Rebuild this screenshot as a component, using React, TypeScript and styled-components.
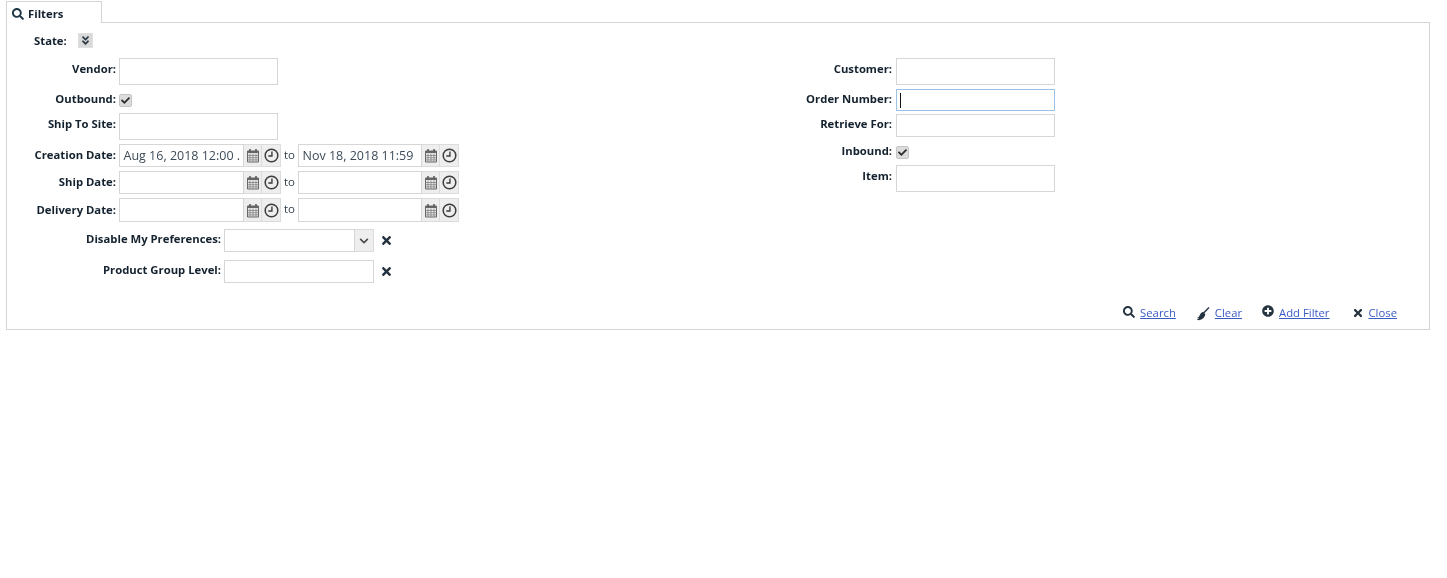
import React from "react";
import styled, { createGlobalStyle } from "styled-components";
import { FaSearch, FaTimes, FaChevronDown, FaAngleDoubleDown, FaCheck, FaPlusCircle } from "react-icons/fa";

const Global = createGlobalStyle`
  html, body { margin: 0; padding: 0; background: #fff; }
  body { font-family: "Open Sans", "Liberation Sans", sans-serif; font-size: 12px; color: #1f2d3a; }
`;

const Page = styled.div`
  padding: 1px 17px 0 6px;
  width: 1424px;
  filter: blur(0.25px);
`;

const Tab = styled.div`
  box-sizing: border-box;
  width: 96px;
  height: 22px;
  margin-bottom: -1px;
  position: relative;
  z-index: 1;
  background: #fff;
  border: 1px solid #d4d4d4;
  border-bottom: none;
  display: flex;
  align-items: center;
  gap: 4px;
  padding: 2px 0 0 5px;
  font-size: 11.3px;
  font-weight: 700;
  color: #14222f;
  svg { font-size: 12px; color: #1f3846; }
`;

const Panel = styled.div`
  box-sizing: border-box;
  height: 308px;
  border: 1px solid #d4d4d4;
  padding-top: 10px;
  display: flex;
  flex-direction: column;
`;

const StateRow = styled.div`
  display: flex;
  align-items: center;
  height: 15px;
  padding-left: 27px;
  font-size: 11.3px;
  font-weight: 700;
  color: #14222f;
`;

const StateText = styled.span``;

const Toggle = styled.span`
  box-sizing: border-box;
  width: 15px;
  height: 15px;
  margin-left: 11px;
  background: #d9d9d9;
  border: 1px solid #e0e0e0;
  display: flex;
  align-items: center;
  justify-content: center;
  color: #2c3a46;
  svg { font-size: 11px; }
`;

const Columns = styled.div`
  display: grid;
  grid-template-columns: 776px 1fr;
  margin-top: 10px;
  flex: 1;
`;

const Column = styled.div`
  display: flex;
  flex-direction: column;
`;

const Row = styled.div<{ $h: number; $top?: number }>`
  display: flex;
  align-items: center;
  height: ${(p) => p.$h}px;
  margin-top: ${(p) => p.$top ?? 0}px;
`;

const Label = styled.label<{ $w: number; $gap?: number; $lift?: number }>`
  width: ${(p) => p.$w}px;
  margin-right: ${(p) => p.$gap ?? 3}px;
  margin-top: ${(p) => -2 * (p.$lift ?? 1.5)}px;
  text-align: right;
  flex: none;
  font-size: 11.3px;
  font-weight: 700;
  color: #14222f;
  white-space: nowrap;
`;

const TextBox = styled.div<{ $w: number; $focus?: boolean }>`
  box-sizing: border-box;
  width: ${(p) => p.$w}px;
  height: 100%;
  flex: none;
  background: #fff;
  border: 1px solid ${(p) => (p.$focus ? "#9cc3e6" : "#d6d6d6")};
  display: flex;
  align-items: center;
  padding-left: 3.5px;
  font-size: 12.5px;
  color: #3e4c59;
  white-space: nowrap;
  overflow: hidden;
`;

const Caret = styled.span`
  width: 1px;
  height: 15px;
  margin-left: -1px;
  background: #111;
`;

const Check = styled.span`
  box-sizing: border-box;
  width: 13px;
  height: 13px;
  background: #dcdcdc;
  border: 1px solid #c4c4c4;
  border-radius: 2px;
  display: flex;
  align-items: center;
  justify-content: center;
  color: #2d2d2d;
  svg { font-size: 9px; }
`;

const Addon = styled.span<{ $w: number }>`
  box-sizing: border-box;
  width: ${(p) => p.$w}px;
  height: 100%;
  flex: none;
  background: #eeeeee;
  border: 1px solid #dcdcdc;
  border-left: none;
  display: flex;
  align-items: center;
  justify-content: center;
  color: #4a4a4a;
`;

const To = styled.span`
  width: 17px;
  flex: none;
  text-align: center;
  font-size: 11.5px;
  color: #33424f;
  margin-top: -3px;
`;

const ClearBtn = styled.span`
  margin-left: 6px;
  display: flex;
  color: #22313e;
  svg { font-size: 13px; }
`;

const Footer = styled.div`
  height: 24px;
  margin-bottom: 5px;
  display: flex;
  align-items: center;
  justify-content: flex-end;
  padding-right: 32px;
`;

const Action = styled.span<{ $left: number; $drop?: number }>`
  display: flex;
  align-items: center;
  margin-left: ${(p) => p.$left}px;
  gap: 5px;
  svg { font-size: 12px; color: #26343f; flex: none; position: relative; top: ${(p) => p.$drop ?? 0}px; }
`;

const LinkText = styled.a`
  font-size: 11.3px;
  color: #3b5bc4;
  text-decoration: underline;
`;

const CalendarIcon = () => (
  <svg width="14" height="15" viewBox="0 0 14 15" fill="none">
    <path d="M1.5 3h11v11h-11z" fill="#e8e8e8" stroke="#666" />
    <path d="M1.5 3h11v2h-11z" fill="#666" />
    <path d="M4 5.5v8M7 5.5v8M10 5.5v8M1.5 7.500h11M1.500 9.700h11M1.500 11.900h11" stroke="#777" strokeWidth="0.7" />
    <path d="M4 1v2.500M10 1v2.500" stroke="#555" strokeWidth="1.5" />
  </svg>
);

const ClockIcon = () => (
  <svg width="15" height="15" viewBox="0 0 14 14" fill="none">
    <circle cx="7" cy="7" r="5.9" stroke="#3d3d3d" strokeWidth="1.4" />
    <path d="M7.4 3.2v4.2H4" stroke="#3d3d3d" strokeWidth="1.3" />
  </svg>
);

const BroomIcon = () => (
  <svg width="14" height="14" viewBox="0 0 14 14">
    <path d="M13 .6 7.600 6" stroke="#26343f" strokeWidth="1.4" fill="none" />
    <path d="M6.600 4.900c1.400.3 2.400 1.300 2.700 2.600-.4 2.600-2.600 4.900-5.500 5.600-1.200.2-2.400-.2-3-.9.9 0 1.700-.3 2.300-1-.9.3-1.700.2-2.300-.2 1.200-.3 2-1 2.500-2 .6-1.600 1.500-3.200 3.300-4.100Z" fill="#26343f" />
  </svg>
);

const DateField: React.FC<{ value?: string; w: number }> = ({ value, w }) => (
  <>
    <TextBox $w={w}>{value}</TextBox>
    <Addon $w={18}><CalendarIcon /></Addon>
    <Addon $w={19}><ClockIcon /></Addon>
  </>
);

const DateRow: React.FC<{ label: string; h: number; top: number; from?: string; to?: string }> = ({ label, h, top, from, to }) => (
  <Row $h={h} $top={top}>
    <Label $w={109} $lift={1}>{label}</Label>
    <DateField value={from} w={125} />
    <To>to</To>
    <DateField value={to} w={124} />
  </Row>
);

export default function App() {
  return (
    <Page>
      <Global />
      <Tab><FaSearch />Filters</Tab>
      <Panel>
        <StateRow><StateText>State:</StateText><Toggle><FaAngleDoubleDown /></Toggle></StateRow>
        <Columns>
          <Column>
            <Row $h={27}><Label $w={109} $lift={3.5}>Vendor:</Label><TextBox $w={159} /></Row>
            <Row $h={14} $top={8}><Label $w={109} $lift={1.5}>Outbound:</Label><Check><FaCheck /></Check></Row>
            <Row $h={27} $top={6}><Label $w={109} $lift={3.5}>Ship To Site:</Label><TextBox $w={159} /></Row>
            <DateRow label="Creation Date:" h={23} top={4} from="Aug 16, 2018 12:00 ." to="Nov 18, 2018 11:59" />
            <DateRow label="Ship Date:" h={23} top={4} />
            <DateRow label="Delivery Date:" h={24} top={4} />
            <Row $h={23} $top={7}>
              <Label $w={214} $lift={2}>Disable My Preferences:</Label>
              <TextBox $w={131} />
              <Addon $w={19}><FaChevronDown size={10} /></Addon>
              <ClearBtn><FaTimes /></ClearBtn>
            </Row>
            <Row $h={23} $top={8}>
              <Label $w={214} $lift={2}>Product Group Level:</Label>
              <TextBox $w={150} />
              <ClearBtn><FaTimes /></ClearBtn>
            </Row>
          </Column>
          <Column>
            <Row $h={27}><Label $w={109} $gap={4} $lift={3.5}>Customer:</Label><TextBox $w={159} /></Row>
            <Row $h={22} $top={4}><Label $w={109} $gap={4} $lift={1.5}>Order Number:</Label><TextBox $w={159} $focus><Caret /></TextBox></Row>
            <Row $h={23} $top={3}><Label $w={109} $gap={4} $lift={2}>Retrieve For:</Label><TextBox $w={159} /></Row>
            <Row $h={14} $top={8}><Label $w={109} $gap={4} $lift={1.5}>Inbound:</Label><Check><FaCheck /></Check></Row>
            <Row $h={27} $top={6}><Label $w={109} $gap={4} $lift={3.5}>Item:</Label><TextBox $w={159} /></Row>
          </Column>
        </Columns>
        <Footer>
          <Action $left={0}><FaSearch /><LinkText>Search</LinkText></Action>
          <Action $left={20} $drop={2}><BroomIcon /><LinkText>Clear</LinkText></Action>
          <Action $left={20} $drop={-1}><FaPlusCircle /><LinkText>Add Filter</LinkText></Action>
          <Action $left={22} $drop={1}><FaTimes /><LinkText>Close</LinkText></Action>
        </Footer>
      </Panel>
    </Page>
  );
}
